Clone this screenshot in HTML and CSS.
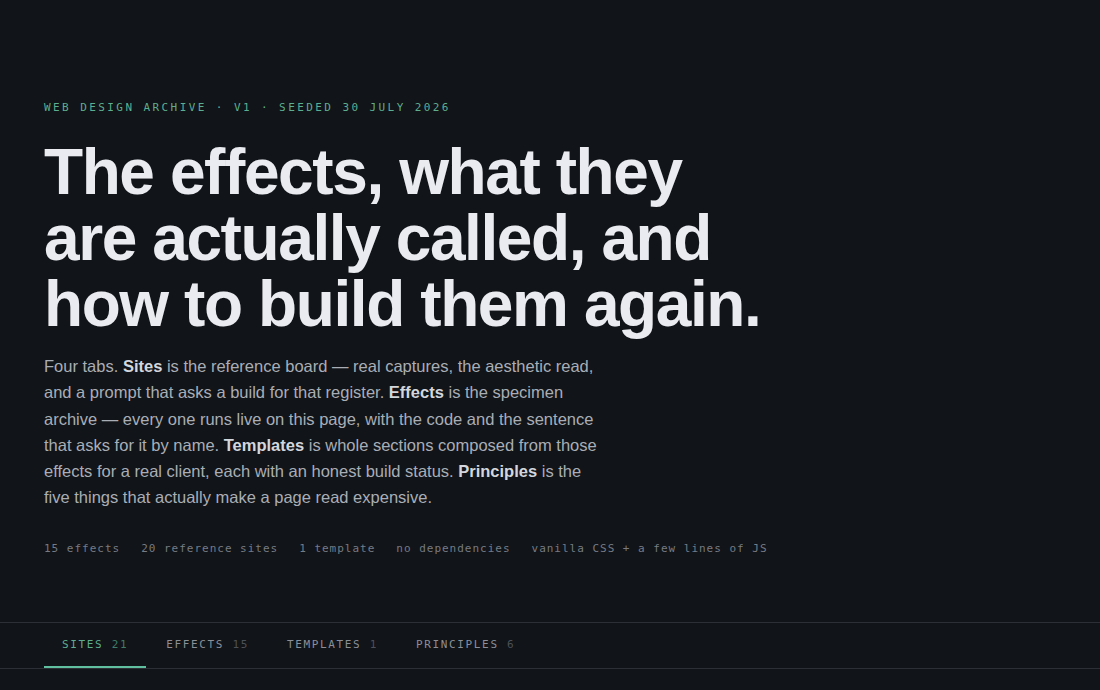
FILE: index.html
```html
<!DOCTYPE html>
<html lang="en">
<head>
<meta charset="utf-8">
<title>Web Design Archive</title>
<link rel="stylesheet" href="styles.css">
</head>
<body>
<header class="hero">
  <p class="eyebrow">Web design archive · v1 · seeded 30 July 2026</p>
  <h1 class="title">The effects, what they<br>are actually called, and<br>how to build them again.</h1>
  <p class="lede">Four tabs. <b>Sites</b> is the reference board — real captures, the aesthetic read, and a prompt that asks a build for that register. <b>Effects</b> is the specimen archive — every one runs live on this page, with the code and the sentence that asks for it by name. <b>Templates</b> is whole sections composed from those effects for a real client, each with an honest build status. <b>Principles</b> is the five things that actually make a page read expensive.</p>
  <ul class="stats">
    <li>15 effects</li>
    <li>20 reference sites</li>
    <li>1 template</li>
    <li>no dependencies</li>
    <li>vanilla CSS + a few lines of JS</li>
  </ul>
</header>
<nav class="tabs">
  <a class="tab active" href="#">Sites <span class="count">21</span></a>
  <a class="tab" href="#">Effects <span class="count">15</span></a>
  <a class="tab" href="#">Templates <span class="count">1</span></a>
  <a class="tab" href="#">Principles <span class="count">6</span></a>
</nav>
</body>
</html>
```
FILE: styles.css
```css
html, body {
  margin: 0;
  padding: 0;
  background: #111418;
}
body {
  font-family: "Liberation Sans", Arial, sans-serif;
  color: #e9ebf0;
}
.hero {
  padding: 101px 44px 0;
  height: 622px;
  box-sizing: border-box;
}
.eyebrow {
  margin: 0;
  font-family: "DejaVu Sans Mono", monospace;
  font-size: 11px;
  line-height: 14px;
  letter-spacing: 0.22em;
  text-transform: uppercase;
  color: #5dae90;
}
.title {
  margin: 24px 0 0;
  font-size: 64px;
  line-height: 66px;
  font-weight: 700;
  letter-spacing: -0.022em;
  color: #e9ebf0;
}
.lede {
  margin: 16px 0 0;
  max-width: 560px;
  font-size: 16.5px;
  line-height: 26.3px;
  color: #a9aeb6;
}
.lede b {
  color: #d3d7dd;
  font-weight: 700;
}
.stats {
  list-style: none;
  margin: 31px 0 0;
  padding: 0;
  display: flex;
  gap: 21px;
  font-family: "DejaVu Sans Mono", monospace;
  font-size: 11px;
  line-height: 14px;
  letter-spacing: 0.09em;
  color: #767b84;
}
.tabs {
  border-top: 1px solid #2c3036;
  border-bottom: 1px solid #2c3036;
  padding: 0 44px;
  display: flex;
  gap: 2px;
}
.tab {
  display: block;
  padding: 15px 18px 14px;
  font-family: "DejaVu Sans Mono", monospace;
  font-size: 11px;
  line-height: 14px;
  letter-spacing: 0.15em;
  text-transform: uppercase;
  text-decoration: none;
  color: #8a8f98;
  border-bottom: 2px solid transparent;
}
.tab .count {
  color: #4c5159;
}
.tab.active {
  color: #5dae90;
  border-bottom-color: #5fbf9f;
}
.tab.active .count {
  color: #3f7d68;
}
```
